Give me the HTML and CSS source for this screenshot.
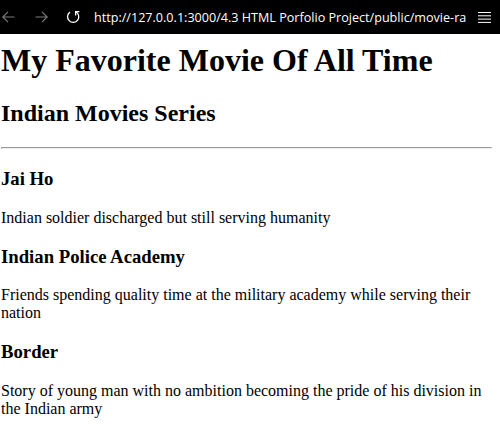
FILE: index.html
```html
<!DOCTYPE html>
<html lang="en">
<head>
<meta charset="utf-8">
<title>Movie Ranking</title>
<link rel="stylesheet" href="styles.css">
</head>
<body>
<header class="toolbar">
  <span class="nav-btn back">
    <svg width="13" height="12" viewBox="0 0 13 12"><path d="M12.5 6H1M6 0.8L0.8 6L6 11.2" fill="none" stroke="#7a7a7a" stroke-width="1.2"/></svg>
  </span>
  <span class="nav-btn fwd">
    <svg width="13" height="12" viewBox="0 0 13 12"><path d="M0.5 6H12M7 0.8L12.2 6L7 11.2" fill="none" stroke="#7a7a7a" stroke-width="1.2"/></svg>
  </span>
  <span class="nav-btn reload">
    <svg width="14" height="14" viewBox="0 0 14 14"><path d="M4 2.1A5.6 5.6 0 1 0 9.6 1.7" fill="none" stroke="#fff" stroke-width="1.3"/><path d="M9.6 1.1V5.4M9.6 1.7H13.4" fill="none" stroke="#fff" stroke-width="1.3"/></svg>
  </span>
  <span class="url">http://127.0.0.1:3000/4.3 HTML Porfolio Project/public/movie-ra</span>
  <span class="menu">
    <svg width="13" height="12" viewBox="0 0 13 12"><path d="M0 1.5H13M0 4.8H13M0 8.1H13M0 11.4H13" stroke="#fff" stroke-width="1"/></svg>
  </span>
</header>
<main class="page">
  <h1 class="title">My Favorite Movie Of All Time</h1>
  <h2>Indian Movies Series</h2>
  <hr>
  <h3>Jai Ho</h3>
  <p>Indian soldier discharged but still serving humanity</p>
  <h3>Indian Police Academy</h3>
  <p>Friends spending quality time at the military academy while serving their nation</p>
  <h3>Border</h3>
  <p>Story of young man with no ambition becoming the pride of his division in the Indian army</p>
</main>
</body>
</html>
```
FILE: styles.css
```css
html, body {
  margin: 0;
  background: #fff;
}
body {
  font-family: "Liberation Serif", "Times New Roman", serif;
  color: #000;
}
.toolbar {
  height: 34px;
  background: #000;
  display: flex;
  align-items: center;
  box-sizing: border-box;
  padding: 0 9px 0 2px;
  overflow: hidden;
}
.nav-btn {
  display: flex;
  align-items: center;
  justify-content: center;
}
.back { width: 13px; }
.fwd { width: 13px; margin-left: 20px; }
.reload { width: 14px; margin-left: 18px; }
.url {
  flex: 1;
  min-width: 0;
  margin-left: 14px;
  margin-right: 12px;
  color: #fff;
  font-family: "Open Sans", "DejaVu Sans", sans-serif;
  font-size: 12.6px;
  white-space: nowrap;
  overflow: hidden;
}
.menu {
  display: flex;
  width: 13px;
}
.page {
  padding: 8px 8px 8px 1px;
}
.title {
  margin-top: 0;
}
```
